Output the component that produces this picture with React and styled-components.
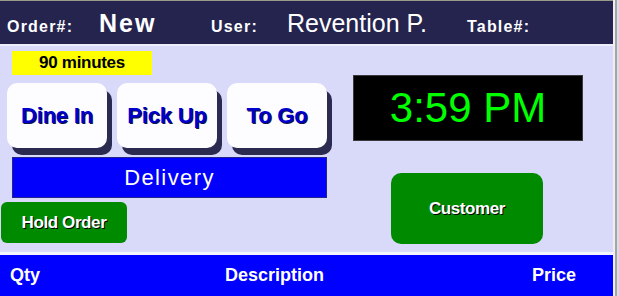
import React from "react";
import styled, { createGlobalStyle } from "styled-components";

const Global = createGlobalStyle`
  html, body { margin: 0; padding: 0; background: #d9d9f9; }
  body { font-family: "Liberation Sans", Arial, sans-serif; }
  * { box-sizing: border-box; }
`;

const Frame = styled.div`
  width: 619px;
  height: 296px;
  display: flex;
  overflow: hidden;
  background: #d9d9f9;
`;

const Screen = styled.div`
  width: 613px;
  height: 296px;
  display: flex;
  flex-direction: column;
`;

const Edge = styled.div`
  width: 6px;
  height: 296px;
  background: linear-gradient(to right, #eeeef8 0 2px, #a6a69c 2px 4px, #dcdcf0 4px);
`;

const Header = styled.header`
  height: 46px;
  flex: none;
  display: flex;
  align-items: baseline;
  padding: 0 0 0 7px;
  background: #25244f;
  border-top: 1px solid #9a9a88;
  border-bottom: 2px solid #ececfb;
  color: #fff;
`;

const Cell = styled.div`
  width: ${(p) => (p.$w ? `${p.$w}px` : "auto")};
  flex: none;
  white-space: nowrap;
  line-height: 44px;
`;

const Label = styled.span`
  font-weight: bold;
  font-size: 16px;
  letter-spacing: 1.2px;
`;

const Big = styled.span`
  font-size: 25px;
  font-weight: ${(p) => (p.$bold ? "bold" : "normal")};
  letter-spacing: ${(p) => (p.$bold ? "2px" : "0")};
`;

const Main = styled.div`
  height: 206px;
  flex: none;
  display: flex;
`;

const LeftCol = styled.div`
  width: 340px;
  display: flex;
  flex-direction: column;
  padding-top: 5px;
`;

const Timer = styled.div`
  margin-left: 12px;
  width: 140px;
  height: 24px;
  background: #ffff00;
  display: flex;
  align-items: center;
  justify-content: center;
  font-weight: bold;
  font-size: 17px;
  letter-spacing: -0.3px;
  color: #000;
`;

const TypeRow = styled.div`
  display: flex;
  gap: 10px;
  margin-top: 8px;
  padding-left: 7px;
`;

const TypeButton = styled.button`
  width: 100px;
  height: 65px;
  border: none;
  border-radius: 10px;
  background: #fdfdff;
  box-shadow: 5px 7px 0 #2b2a50;
  font-family: "Liberation Sans", Arial, sans-serif;
  font-weight: bold;
  font-size: 22px;
  letter-spacing: -0.2px;
  color: #0000cc;
  text-shadow: 1px 1px 0 #141446;
  padding: 0;
  cursor: pointer;
`;

const DeliveryBar = styled.div`
  margin-top: 9px;
  margin-left: 12px;
  width: 315px;
  height: 41px;
  background: #0000fc;
  border: 1px solid #25248a;
  display: flex;
  align-items: center;
  justify-content: center;
  color: #fff;
  font-size: 22px;
  letter-spacing: 1.4px;
`;

const GreenButton = styled.button`
  width: ${(p) => p.$w}px;
  height: ${(p) => p.$h}px;
  margin-left: ${(p) => p.$ml}px;
  margin-top: ${(p) => p.$mt}px;
  border: none;
  border-radius: ${(p) => p.$r}px;
  background: #008a00;
  color: #fff;
  font-family: "Liberation Sans", Arial, sans-serif;
  font-weight: bold;
  font-size: 17px;
  letter-spacing: -0.4px;
  text-shadow: 1px 1px 0 #000;
  padding: 0;
  cursor: pointer;
`;

const RightCol = styled.div`
  flex: 1;
  display: flex;
  flex-direction: column;
`;

const Clock = styled.div`
  margin-left: 13px;
  margin-top: 29px;
  width: 230px;
  height: 66px;
  background: #000;
  border: 1px solid #3a3a3a;
  display: flex;
  align-items: center;
  justify-content: center;
  color: #00ff00;
  font-size: 42px;
`;

const Columns = styled.div`
  height: 44px;
  flex: none;
  display: flex;
  align-items: center;
  background: #0000ff;
  border-top: 3px solid #f4f4ff;
  padding-left: 10px;
  color: #fff;
  font-weight: bold;
  font-size: 18px;
`;

const Col = styled.div`
  width: ${(p) => (p.$w ? `${p.$w}px` : "auto")};
  flex: none;
`;

export default function App() {
  return (
    <>
      <Global />
      <Frame>
        <Screen>
          <Header>
            <Cell $w={92}><Label>Order#:</Label></Cell>
            <Cell $w={112}><Big $bold>New</Big></Cell>
            <Cell $w={76}><Label>User:</Label></Cell>
            <Cell $w={180}><Big>Revention P.</Big></Cell>
            <Cell><Label>Table#:</Label></Cell>
          </Header>
          <Main>
            <LeftCol>
              <Timer>90 minutes</Timer>
              <TypeRow>
                <TypeButton>Dine In</TypeButton>
                <TypeButton>Pick Up</TypeButton>
                <TypeButton>To Go</TypeButton>
              </TypeRow>
              <DeliveryBar>Delivery</DeliveryBar>
              <GreenButton $w={126} $h={41} $ml={1} $mt={4} $r={6}>Hold Order</GreenButton>
            </LeftCol>
            <RightCol>
              <Clock>3:59 PM</Clock>
              <GreenButton $w={152} $h={71} $ml={51} $mt={32} $r={10}>Customer</GreenButton>
            </RightCol>
          </Main>
          <Columns>
            <Col $w={215}>Qty</Col>
            <Col $w={307}>Description</Col>
            <Col>Price</Col>
          </Columns>
        </Screen>
        <Edge />
      </Frame>
    </>
  );
}
